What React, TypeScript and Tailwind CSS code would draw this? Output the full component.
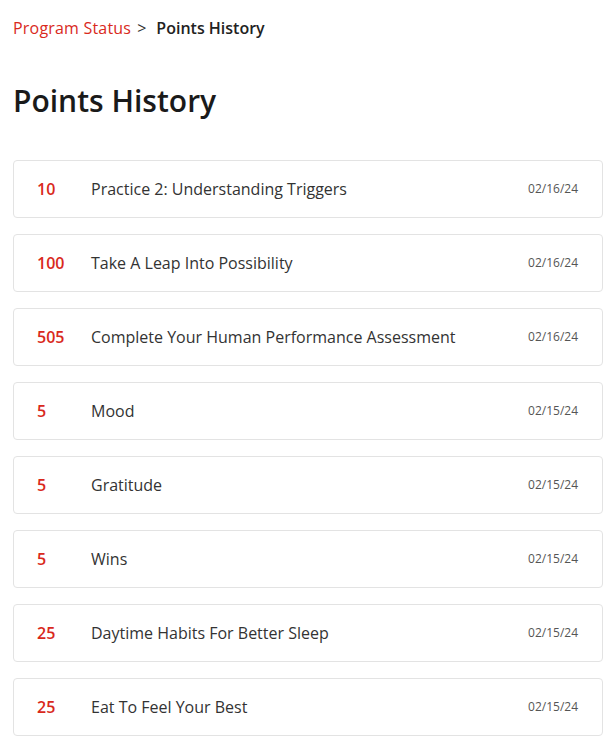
import React from "react";

interface PointsEntry {
  points: number;
  title: string;
  date: string;
}

const entries: PointsEntry[] = [
  { points: 10, title: "Practice 2: Understanding Triggers", date: "02/16/24" },
  { points: 100, title: "Take A Leap Into Possibility", date: "02/16/24" },
  { points: 505, title: "Complete Your Human Performance Assessment", date: "02/16/24" },
  { points: 5, title: "Mood", date: "02/15/24" },
  { points: 5, title: "Gratitude", date: "02/15/24" },
  { points: 5, title: "Wins", date: "02/15/24" },
  { points: 25, title: "Daytime Habits For Better Sleep", date: "02/15/24" },
  { points: 25, title: "Eat To Feel Your Best", date: "02/15/24" },
];

export default function App() {
  return (
    <div className="bg-white min-h-screen px-[13px] pt-[17px] font-['Open_Sans',sans-serif] text-[#222]">
      {/* Breadcrumb */}
      <nav className="flex items-center text-[16px] leading-[22px]">
        <a href="#" className="text-[#d9291c] tracking-[0.2px]">Program Status</a>
        <span className="ml-[6px] mr-[10px] text-[#333]">&gt;</span>
        <span className="font-semibold text-[#222]">Points History</span>
      </nav>

      {/* Title */}
      <h1 className="mt-[40px] text-[30px] leading-[44px] font-semibold text-[#1a1a1a]">
        Points History
      </h1>

      {/* History list */}
      <ul className="mt-[37px] flex flex-col gap-4">
        {entries.map((entry, i) => (
          <li
            key={i}
            className="h-[58px] flex items-center border border-[#e3e3e3] rounded-[4px] pl-[23px] pr-[24px]"
          >
            <span className="w-[54px] text-[16px] font-semibold text-[#d9291c]">
              {entry.points}
            </span>
            <span className="flex-1 text-[16px] text-[#333]">{entry.title}</span>
            <span className="text-[12px] text-[#555]">{entry.date}</span>
          </li>
        ))}
      </ul>
    </div>
  );
}
